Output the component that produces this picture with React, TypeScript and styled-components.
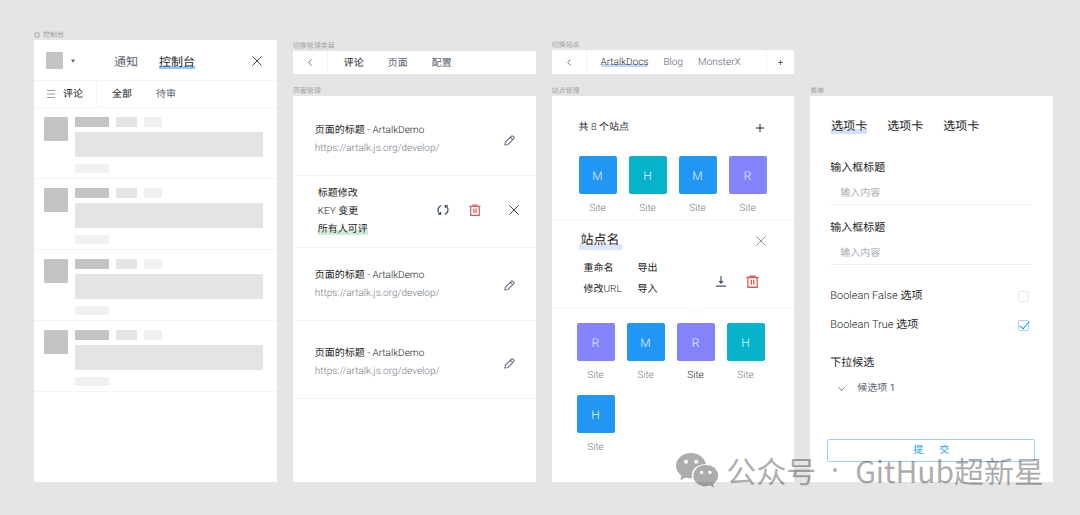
import React from "react";
import styled, { createGlobalStyle, css } from "styled-components";

const color = {
  canvas: "#e5e5e5",
  line: "#f5f5f5",
  ink: "#1b1b1b",
  slate: "#5b6273",
  muted: "#757b86",
  hint: "#a9adb5",
  blue: "#2196f3",
  cyan: "#07b3cb",
  violet: "#8583fc",
  red: "#d65c5c",
};

const GlobalStyle = createGlobalStyle`
  *, *::before, *::after { box-sizing: border-box; }
  body {
    margin: 0;
    background: ${color.canvas};
    color: ${color.ink};
    font: 400 10px/18px Roboto, "Noto Sans CJK SC", sans-serif;
    text-rendering: geometricPrecision;
  }
  button, input, select {
    margin: 0;
    padding: 0;
    border: 0;
    background: none;
    color: inherit;
    font: inherit;
    text-rendering: inherit;
  }
  button { cursor: pointer; }
  h2, h3, p { margin: 0; font: inherit; }
  svg { display: block; flex: none; }
`;

const Board = styled.main`
  position: relative;
  display: grid;
  grid-template-columns: repeat(4, minmax(0, 1fr));
  gap: 16px;
  min-height: 100vh;
  padding: 30px 27px 33px 34px;
`;

const Column = styled.div<{ $top?: number }>`
  display: flex;
  flex-direction: column;
  padding-top: ${(p) => p.$top ?? 0}px;
`;

const FrameLabel = styled.h2`
  display: flex;
  align-items: center;
  gap: 3px;
  height: 10px;
  color: #a0a0a0;
  font-size: 7px;
  line-height: 10px;
  white-space: nowrap;
`;

const Frame = styled.section`
  flex: 1;
  background: #fff;
`;

const Latin = styled.span`
  font-weight: 300;
`;

const highlight = (tone: string, size: number) => css`
  background: linear-gradient(${tone}, ${tone}) bottom / 100% ${size}px no-repeat;
`;

const Cell = styled.div<{ $edge?: "left" | "right"; $width: number }>`
  display: flex;
  align-items: center;
  justify-content: center;
  gap: 8px;
  flex: none;
  width: ${(p) => p.$width}px;
  ${(p) => p.$edge && `border-${p.$edge}: 1px solid ${color.line};`}
`;

const IconButton = styled.button<{ $tone?: string }>`
  display: flex;
  align-items: center;
  justify-content: center;
  color: ${(p) => p.$tone ?? color.ink};
`;

const Tabs = styled.nav<{ $gap: number; $left: number }>`
  display: flex;
  flex: 1;
  align-items: center;
  gap: ${(p) => p.$gap}px;
  padding-left: ${(p) => p.$left}px;
`;

const Tab = styled.button<{ $active?: boolean; $large?: boolean; $mark?: string; $light?: boolean }>`
  height: 16px;
  color: ${(p) => (p.$active ? color.ink : color.slate)};
  font-size: ${(p) => (p.$large ? 12 : 10)}px;
  font-weight: ${(p) => (p.$light ? 300 : 400)};
  line-height: 18px;
  white-space: nowrap;
  ${(p) =>
    p.$mark &&
    `background: linear-gradient(${p.$mark}, ${p.$mark}) 0 ${p.$large ? 13 : 10}px / 100% 3px no-repeat;`}
`;

/* Console frame */

const ConsoleHeader = styled.header`
  display: flex;
  align-items: center;
  height: 41px;
  padding: 1px 15px 0 12px;
  border-bottom: 1px solid ${color.line};
`;

const SiteSwitch = styled.button`
  display: flex;
  align-items: center;
  gap: 8px;
`;

const Swatch = styled.span`
  width: 17px;
  height: 17px;
  border-radius: 1px;
  background: #c4c4c4;
`;

const SubBar = styled.div`
  display: flex;
  height: 27px;
  border-bottom: 1px solid ${color.line};
`;

const Comment = styled.article`
  display: flex;
  gap: 7px;
  height: 71px;
  padding: 9px 14px 5px 10px;
  border-bottom: 1px solid ${color.line};
`;

const Avatar = styled.span`
  flex: none;
  width: 24px;
  height: 24px;
  border-radius: 1px;
  background: #c4c4c4;
`;

const CommentBody = styled.div`
  flex: 1;
`;

const Chips = styled.div`
  display: flex;
  gap: 7px;
`;

const Chip = styled.span<{ $width: number; $tone: string }>`
  width: ${(p) => p.$width}px;
  height: 10px;
  background: ${(p) => p.$tone};
`;

const Content = styled.div`
  height: 25px;
  margin: 5px 0 7px;
  background: #e4e4e4;
`;

const Action = styled.div`
  width: 34px;
  height: 9px;
  background: #f1f1f1;
`;

/* Switch bars and page list */

const Bar = styled.div<{ $height: number }>`
  display: flex;
  height: ${(p) => p.$height}px;
  margin-bottom: 12px;
  background: #fff;
`;

const PageRow = styled.article<{ $top: number; $bottom?: number; $left?: number; $right?: number }>`
  display: flex;
  align-items: center;
  justify-content: space-between;
  padding: ${(p) => `${p.$top}px ${p.$right ?? 21}px ${p.$bottom ?? 17}px ${p.$left ?? 22}px`};
  border-bottom: 1px solid ${color.line};
`;

const PageUrl = styled.p`
  color: ${color.muted};
  font-weight: 300;
`;

const TextActions = styled.div`
  display: flex;
  flex-direction: column;
  align-items: flex-start;
`;

const TextButton = styled.button<{ $mark?: string }>`
  height: 18px;
  line-height: 18px;
  text-align: left;
  white-space: nowrap;
  ${(p) => p.$mark && `background: linear-gradient(${p.$mark}, ${p.$mark}) 0 9px / 100% 5px no-repeat;`}
`;

const IconActions = styled.div<{ $gap: number; $top?: number; $bottom?: number }>`
  display: flex;
  align-items: center;
  gap: ${(p) => p.$gap}px;
  padding-top: ${(p) => p.$top ?? 0}px;
  padding-bottom: ${(p) => p.$bottom ?? 0}px;
`;

/* Sites */

const SitesHead = styled.header`
  display: flex;
  align-items: center;
  justify-content: space-between;
  height: 60px;
  padding: 3px 30px 0 27px;
`;

const SiteGrid = styled.div<{ $left: number }>`
  display: grid;
  grid-template-columns: repeat(4, 38px);
  gap: 9px 12px;
  padding-left: ${(p) => p.$left}px;
`;

const SiteItem = styled.button<{ $active?: boolean }>`
  display: flex;
  flex-direction: column;
  align-items: center;
  height: 63px;
  gap: 6px;
  color: ${(p) => (p.$active ? color.ink : color.muted)};
  font-weight: 300;
`;

const SiteTile = styled.span<{ $tone: string }>`
  width: 38px;
  height: 38px;
  border-radius: 2px;
  background: ${(p) => p.$tone};
  color: #e4f1ff;
  font-size: 12px;
  font-weight: 300;
  line-height: 40px;
  text-align: center;
`;

const SitePanel = styled.section`
  position: relative;
  height: 90px;
  margin-bottom: 14px;
  padding: 12px 28px 0 27px;
  border-top: 1px solid ${color.line};
  border-bottom: 1px solid ${color.line};
`;

const PanelHead = styled.div`
  display: flex;
  align-items: center;
  justify-content: space-between;
`;

const SiteName = styled.h3`
  height: 18px;
  padding: 0 2px;
  font-size: 13px;
  line-height: 18px;
  ${highlight("#dbe5fd", 6)}
`;

const PanelBody = styled.div`
  display: flex;
  align-items: center;
  justify-content: space-between;
  padding: 10px 7px 0 5px;
`;

const PanelLinks = styled.div`
  display: grid;
  grid-template-columns: 38px auto;
  gap: 3px 16px;
`;

const Notch = styled.svg`
  position: absolute;
  left: 138px;
  bottom: -7px;
`;

/* Form */

const Form = styled.form`
  display: flex;
  flex-direction: column;
  padding: 20px 18px 20px 17px;
`;

const FormTabs = styled.nav`
  display: flex;
  gap: 20px;
  margin-bottom: 25px;
  padding-left: 4px;
`;

const FormTab = styled.button<{ $active?: boolean }>`
  height: 18px;
  font-size: 12px;
  line-height: 20px;
  ${(p) => p.$active && highlight("#d3e1fd", 5)}
`;

const Field = styled.div`
  display: flex;
  flex-direction: column;
  gap: 5px;
  margin-bottom: 14px;
  padding: 0 3px;
`;

const FieldLabel = styled.label`
  font-size: 11px;
  line-height: 18px;
`;

const TextInput = styled.input`
  height: 23px;
  margin-left: 1px;
  padding: 0 9px;
  border-bottom: 1px solid #ededed;
  outline: none;
  &::placeholder { color: ${color.hint}; opacity: 1; }
`;

const CheckRow = styled.div`
  display: flex;
  align-items: center;
  justify-content: space-between;
  margin-top: 8px;
  margin-bottom: 3px;
  padding: 0 6px 0 3px;
`;

const CheckBox = styled.input`
  display: grid;
  place-items: center;
  width: 11px;
  height: 11px;
  border: 1px solid #e6e6e6;
  border-radius: 2px;
  appearance: none;
  &:checked { border-color: #a6d3fb; }
  &:checked::after {
    content: "";
    width: 5px;
    height: 10px;
    border: solid ${color.blue};
    border-width: 0 1px 1px 0;
    transform: translate(1px, -2px) rotate(40deg);
  }
`;

const SelectField = styled.div`
  display: flex;
  flex-direction: column;
  gap: 8px;
  margin-top: 17px;
  padding-left: 3px;
`;

const SelectBox = styled.div`
  display: flex;
  align-items: center;
  gap: 12px;
  padding-left: 8px;
  color: ${color.slate};
`;

const Select = styled.select`
  height: 18px;
  appearance: none;
  outline: none;
`;

const Submit = styled.button`
  display: flex;
  align-items: center;
  justify-content: center;
  gap: 16px;
  height: 23px;
  margin-top: 41px;
  border: 1px solid #9fd0fb;
  border-radius: 2px;
  color: ${color.blue};
  line-height: 12px;
`;

const Watermark = styled.div`
  position: absolute;
  right: 36px;
  bottom: 27px;
  display: flex;
  align-items: center;
  gap: 7px;
  color: #000;
  opacity: 0.32;
  font-family: "Noto Sans CJK SC", sans-serif;
  font-size: 30px;
  line-height: 36px;
  white-space: nowrap;
  pointer-events: none;
`;

const WatermarkText = styled.span`
  display: flex;
  align-items: center;
`;

const Dot = styled.span`
  width: 4px;
  height: 4px;
  margin: 0 18px 0 17px;
  border-radius: 50%;
  background: #000;
`;

/* Icons */

const CloseIcon = () => (
  <svg width="10" height="10" viewBox="0 0 10 10" fill="none" stroke="currentColor" strokeWidth="0.8">
    <path d="M.4.4l9.2 9.2M9.6.4L.4 9.6" />
  </svg>
);

const BackIcon = () => (
  <svg width="4" height="7" viewBox="0 0 4 7" fill="none" stroke="currentColor" strokeWidth="0.9">
    <path d="M3.5.5L.7 3.5l2.8 3" />
  </svg>
);

const PlusIcon = ({ size }: { size: number }) => (
  <svg width={size} height={size} viewBox="0 0 8 8" fill="none" stroke="currentColor">
    <path d="M4 0v8M0 4h8" />
  </svg>
);

const MenuIcon = () => (
  <svg width="8" height="8" viewBox="0 0 8 8" fill="none" stroke="#7d8290" strokeWidth="0.8">
    <path d="M0 .5h8M0 4h8M0 7.5h8" />
  </svg>
);

const PencilIcon = () => (
  <svg width="11" height="11" viewBox="0 0 12 12" fill="none" stroke={color.slate} strokeWidth="1.1" strokeLinejoin="round">
    <path d="M1 11l.5-3.2L8.2 1.2q.7-.6 1.4 0l1.2 1.2q.6.7 0 1.4L4.2 10.500zM7 2.500l2.500 2.500" />
  </svg>
);

const SyncIcon = () => (
  <svg width="12" height="12" viewBox="0 0 12 12" fill="none" stroke="#44546a" strokeWidth="1.2">
    <path d="M4.2 1.500A5 5 0 0 0 3.200 10.300M7.800 10.500A5 5 0 0 0 8.800 1.700" />
    <path d="M1.300 10.400h2.300V8M10.700 1.600H8.400V4" />
  </svg>
);

const TrashIcon = ({ size = 12 }: { size?: number }) => (
  <svg width={size} height={size} viewBox="0 0 12 12" fill="none" stroke={color.red} strokeWidth="1.2">
    <path d="M.4 2.300h11.200M3.200 1h5.600M1.700 2.400v8.900h8.600V2.400M4.900 4.400v4.600M7.100 4.400v4.600" />
  </svg>
);

const DownloadIcon = () => (
  <svg width="10" height="11" viewBox="0 0 10 11" fill="#44546a">
    <path d="M0 9.400h10v1.300H0zM4.400 0h1.200v5h2L5 8 2.400 5h2z" />
  </svg>
);

const ChevronDownIcon = () => (
  <svg width="7" height="4" viewBox="0 0 7 4" fill="none" stroke="currentColor" strokeWidth="0.9">
    <path d="M.5.4l3 3 3-3" />
  </svg>
);

const FrameGlyph = () => (
  <svg width="6" height="6" viewBox="0 0 6 6" fill="none" stroke="#a0a0a0" strokeWidth="0.8">
    <path d="M1 1h4v4H1z" />
  </svg>
);

const WeChatIcon = () => (
  <svg width="43" height="36" viewBox="0 0 43 36" fillRule="evenodd">
    <path d="M15 1C6.800 1 0 6.500 0 13.700c0 4 2.100 7.400 5.500 9.700L4.400 28.200l5.200-2.700c2 .6 4 .9 6.600.8C13.900 18.500 20.500 11.700 30 12.200 28.500 5.500 22.300 1 15 1zM10 7.700a2 2 0 1 1 0 4 2 2 0 0 1 0-4zm10.200 0a2 2 0 1 1 0 4 2 2 0 0 1 0-4z" />
    <path d="M29.900 13C22.700 13 17.300 17.700 17.300 23.700S22.700 34.300 29.900 34.300c1.500 0 2.900-.3 4.200-.7l4.100 2.200-1.100-3.700c3-2 5.100-5 5.100-8.400C42.200 17.700 36.800 13 29.900 13zM25.600 18.700a1.700 1.700 0 1 1 0 3.400 1.700 1.700 0 0 1 0-3.400zm8.300 0a1.700 1.700 0 1 1 0 3.400 1.700 1.700 0 0 1 0-3.400z" />
  </svg>
);

type SiteData = { letter: string; tone: string; active?: boolean };

const topSites: SiteData[] = [
  { letter: "M", tone: color.blue },
  { letter: "H", tone: color.cyan },
  { letter: "M", tone: color.blue },
  { letter: "R", tone: color.violet },
];

const moreSites: SiteData[] = [
  { letter: "R", tone: color.violet },
  { letter: "M", tone: color.blue },
  { letter: "R", tone: color.violet, active: true },
  { letter: "H", tone: color.cyan },
  { letter: "H", tone: color.blue },
];

const Site = ({ letter, tone, active }: SiteData) => (
  <SiteItem type="button" $active={active}>
    <SiteTile $tone={tone}>{letter}</SiteTile>
    Site
  </SiteItem>
);

const PageEntry = ({ top }: { top: number }) => (
  <PageRow $top={top}>
    <div>
      <h3>
        页面的标题<Latin> - ArtalkDemo</Latin>
      </h3>
      <PageUrl>https://artalk.js.org/develop/</PageUrl>
    </div>
    <IconButton type="button" aria-label="编辑">
      <PencilIcon />
    </IconButton>
  </PageRow>
);

export default function App() {
  return (
    <>
      <GlobalStyle />
      <Board>
        <Column>
          <FrameLabel>
            <FrameGlyph />
            控制台
          </FrameLabel>
          <Frame>
            <ConsoleHeader>
              <SiteSwitch type="button" aria-label="站点">
                <Swatch />
                <svg width="4" height="4" viewBox="0 0 4 4" fill={color.slate}>
                  <path d="M0 .5h4L2 3.700z" />
                </svg>
              </SiteSwitch>
              <Tabs $gap={21} $left={39}>
                <Tab $large>通知</Tab>
                <Tab $large $active $mark="#91c6ff">
                  控制台
                </Tab>
              </Tabs>
              <IconButton type="button" aria-label="关闭">
                <CloseIcon />
              </IconButton>
            </ConsoleHeader>
            <SubBar>
              <Cell $width={63} $edge="right">
                <MenuIcon />
                <Tab $active>评论</Tab>
              </Cell>
              <Tabs $gap={24} $left={15}>
                <Tab $active>全部</Tab>
                <Tab>待审</Tab>
              </Tabs>
            </SubBar>
            {[0, 1, 2, 3].map((i) => (
              <Comment key={i}>
                <Avatar />
                <CommentBody>
                  <Chips>
                    <Chip $width={34} $tone="#c4c4c4" />
                    <Chip $width={21} $tone="#e4e4e4" />
                    <Chip $width={18} $tone="#f1f1f1" />
                  </Chips>
                  <Content />
                  <Action />
                </CommentBody>
              </Comment>
            ))}
          </Frame>
        </Column>

        <Column $top={11}>
          <FrameLabel>切换管理类目</FrameLabel>
          <Bar $height={23}>
            <Cell $width={35} $edge="right">
              <IconButton type="button" aria-label="返回" $tone={color.slate}>
                <BackIcon />
              </IconButton>
            </Cell>
            <Tabs $gap={24} $left={16}>
              <Tab $active>评论</Tab>
              <Tab>页面</Tab>
              <Tab>配置</Tab>
            </Tabs>
          </Bar>
          <FrameLabel>页面管理</FrameLabel>
          <Frame>
            <PageEntry top={26} />
            <PageRow $top={9} $bottom={8} $left={25} $right={17}>
              <TextActions>
                <TextButton type="button">标题修改</TextButton>
                <TextButton type="button">
                  <Latin>KEY </Latin>变更
                </TextButton>
                <TextButton type="button" $mark="#cfecd6">
                  所有人可评
                </TextButton>
              </TextActions>
              <IconActions $gap={28} $bottom={4}>
                <IconActions $gap={20}>
                  <IconButton type="button" aria-label="刷新">
                    <SyncIcon />
                  </IconButton>
                  <IconButton type="button" aria-label="删除">
                    <TrashIcon />
                  </IconButton>
                </IconActions>
                <IconButton type="button" aria-label="关闭">
                  <CloseIcon />
                </IconButton>
              </IconActions>
            </PageRow>
            <PageEntry top={19} />
            <PageEntry top={24} />
          </Frame>
        </Column>

        <Column $top={10}>
          <FrameLabel>切换站点</FrameLabel>
          <Bar $height={24}>
            <Cell $width={35} $edge="right">
              <IconButton type="button" aria-label="返回" $tone={color.slate}>
                <BackIcon />
              </IconButton>
            </Cell>
            <Tabs $gap={15} $left={14}>
              <Tab $active $light $mark="#c3d3fb">
                ArtalkDocs
              </Tab>
              <Tab $light>Blog</Tab>
              <Tab $light>MonsterX</Tab>
            </Tabs>
            <Cell $width={28} $edge="left">
              <IconButton type="button" aria-label="新增站点">
                <PlusIcon size={5} />
              </IconButton>
            </Cell>
          </Bar>
          <FrameLabel>站点管理</FrameLabel>
          <Frame>
            <SitesHead>
              <h3>
                共<Latin> 8 </Latin>个站点
              </h3>
              <IconButton type="button" aria-label="新增站点">
                <PlusIcon size={8} />
              </IconButton>
            </SitesHead>
            <SiteGrid $left={27}>
              {topSites.map((s, i) => (
                <Site key={i} {...s} />
              ))}
            </SiteGrid>
            <SitePanel>
              <PanelHead>
                <SiteName>站点名</SiteName>
                <IconButton type="button" aria-label="关闭" $tone={color.muted}>
                  <CloseIcon />
                </IconButton>
              </PanelHead>
              <PanelBody>
                <PanelLinks>
                  <TextButton type="button">重命名</TextButton>
                  <TextButton type="button">导出</TextButton>
                  <TextButton type="button">
                    修改<Latin>URL</Latin>
                  </TextButton>
                  <TextButton type="button">导入</TextButton>
                </PanelLinks>
                <IconActions $gap={20} $top={4}>
                  <IconButton type="button" aria-label="下载">
                    <DownloadIcon />
                  </IconButton>
                  <IconButton type="button" aria-label="删除">
                    <TrashIcon size={13} />
                  </IconButton>
                </IconActions>
              </PanelBody>
              <Notch width="12" height="7" viewBox="0 0 12 7" fill="#fff" stroke="#f0f0f0">
                <path d="M1.500.500l4.500 5 4.500-5" />
              </Notch>
            </SitePanel>
            <SiteGrid $left={25}>
              {moreSites.map((s, i) => (
                <Site key={i} {...s} />
              ))}
            </SiteGrid>
          </Frame>
        </Column>

        <Column $top={56}>
          <FrameLabel>表单</FrameLabel>
          <Frame>
            <Form onSubmit={(e) => e.preventDefault()}>
              <FormTabs>
                <FormTab type="button" $active>
                  选项卡
                </FormTab>
                <FormTab type="button">选项卡</FormTab>
                <FormTab type="button">选项卡</FormTab>
              </FormTabs>
              <Field>
                <FieldLabel htmlFor="first">输入框标题</FieldLabel>
                <TextInput id="first" placeholder="输入内容" />
              </Field>
              <Field>
                <FieldLabel htmlFor="second">输入框标题</FieldLabel>
                <TextInput id="second" placeholder="输入内容" />
              </Field>
              <CheckRow>
                <FieldLabel htmlFor="off">
                  <Latin>Boolean False </Latin>选项
                </FieldLabel>
                <CheckBox id="off" type="checkbox" />
              </CheckRow>
              <CheckRow>
                <FieldLabel htmlFor="on">
                  <Latin>Boolean True </Latin>选项
                </FieldLabel>
                <CheckBox id="on" type="checkbox" defaultChecked />
              </CheckRow>
              <SelectField>
                <FieldLabel htmlFor="choice">下拉候选</FieldLabel>
                <SelectBox>
                  <ChevronDownIcon />
                  <Select id="choice">
                    <option>候选项 1</option>
                  </Select>
                </SelectBox>
              </SelectField>
              <Submit type="submit">
                <span>提</span>
                <span>交</span>
              </Submit>
            </Form>
          </Frame>
        </Column>

        <Watermark>
          <WeChatIcon />
          <WatermarkText>
            公众号
            <Dot />
            GitHub超新星
          </WatermarkText>
        </Watermark>
      </Board>
    </>
  );
}
